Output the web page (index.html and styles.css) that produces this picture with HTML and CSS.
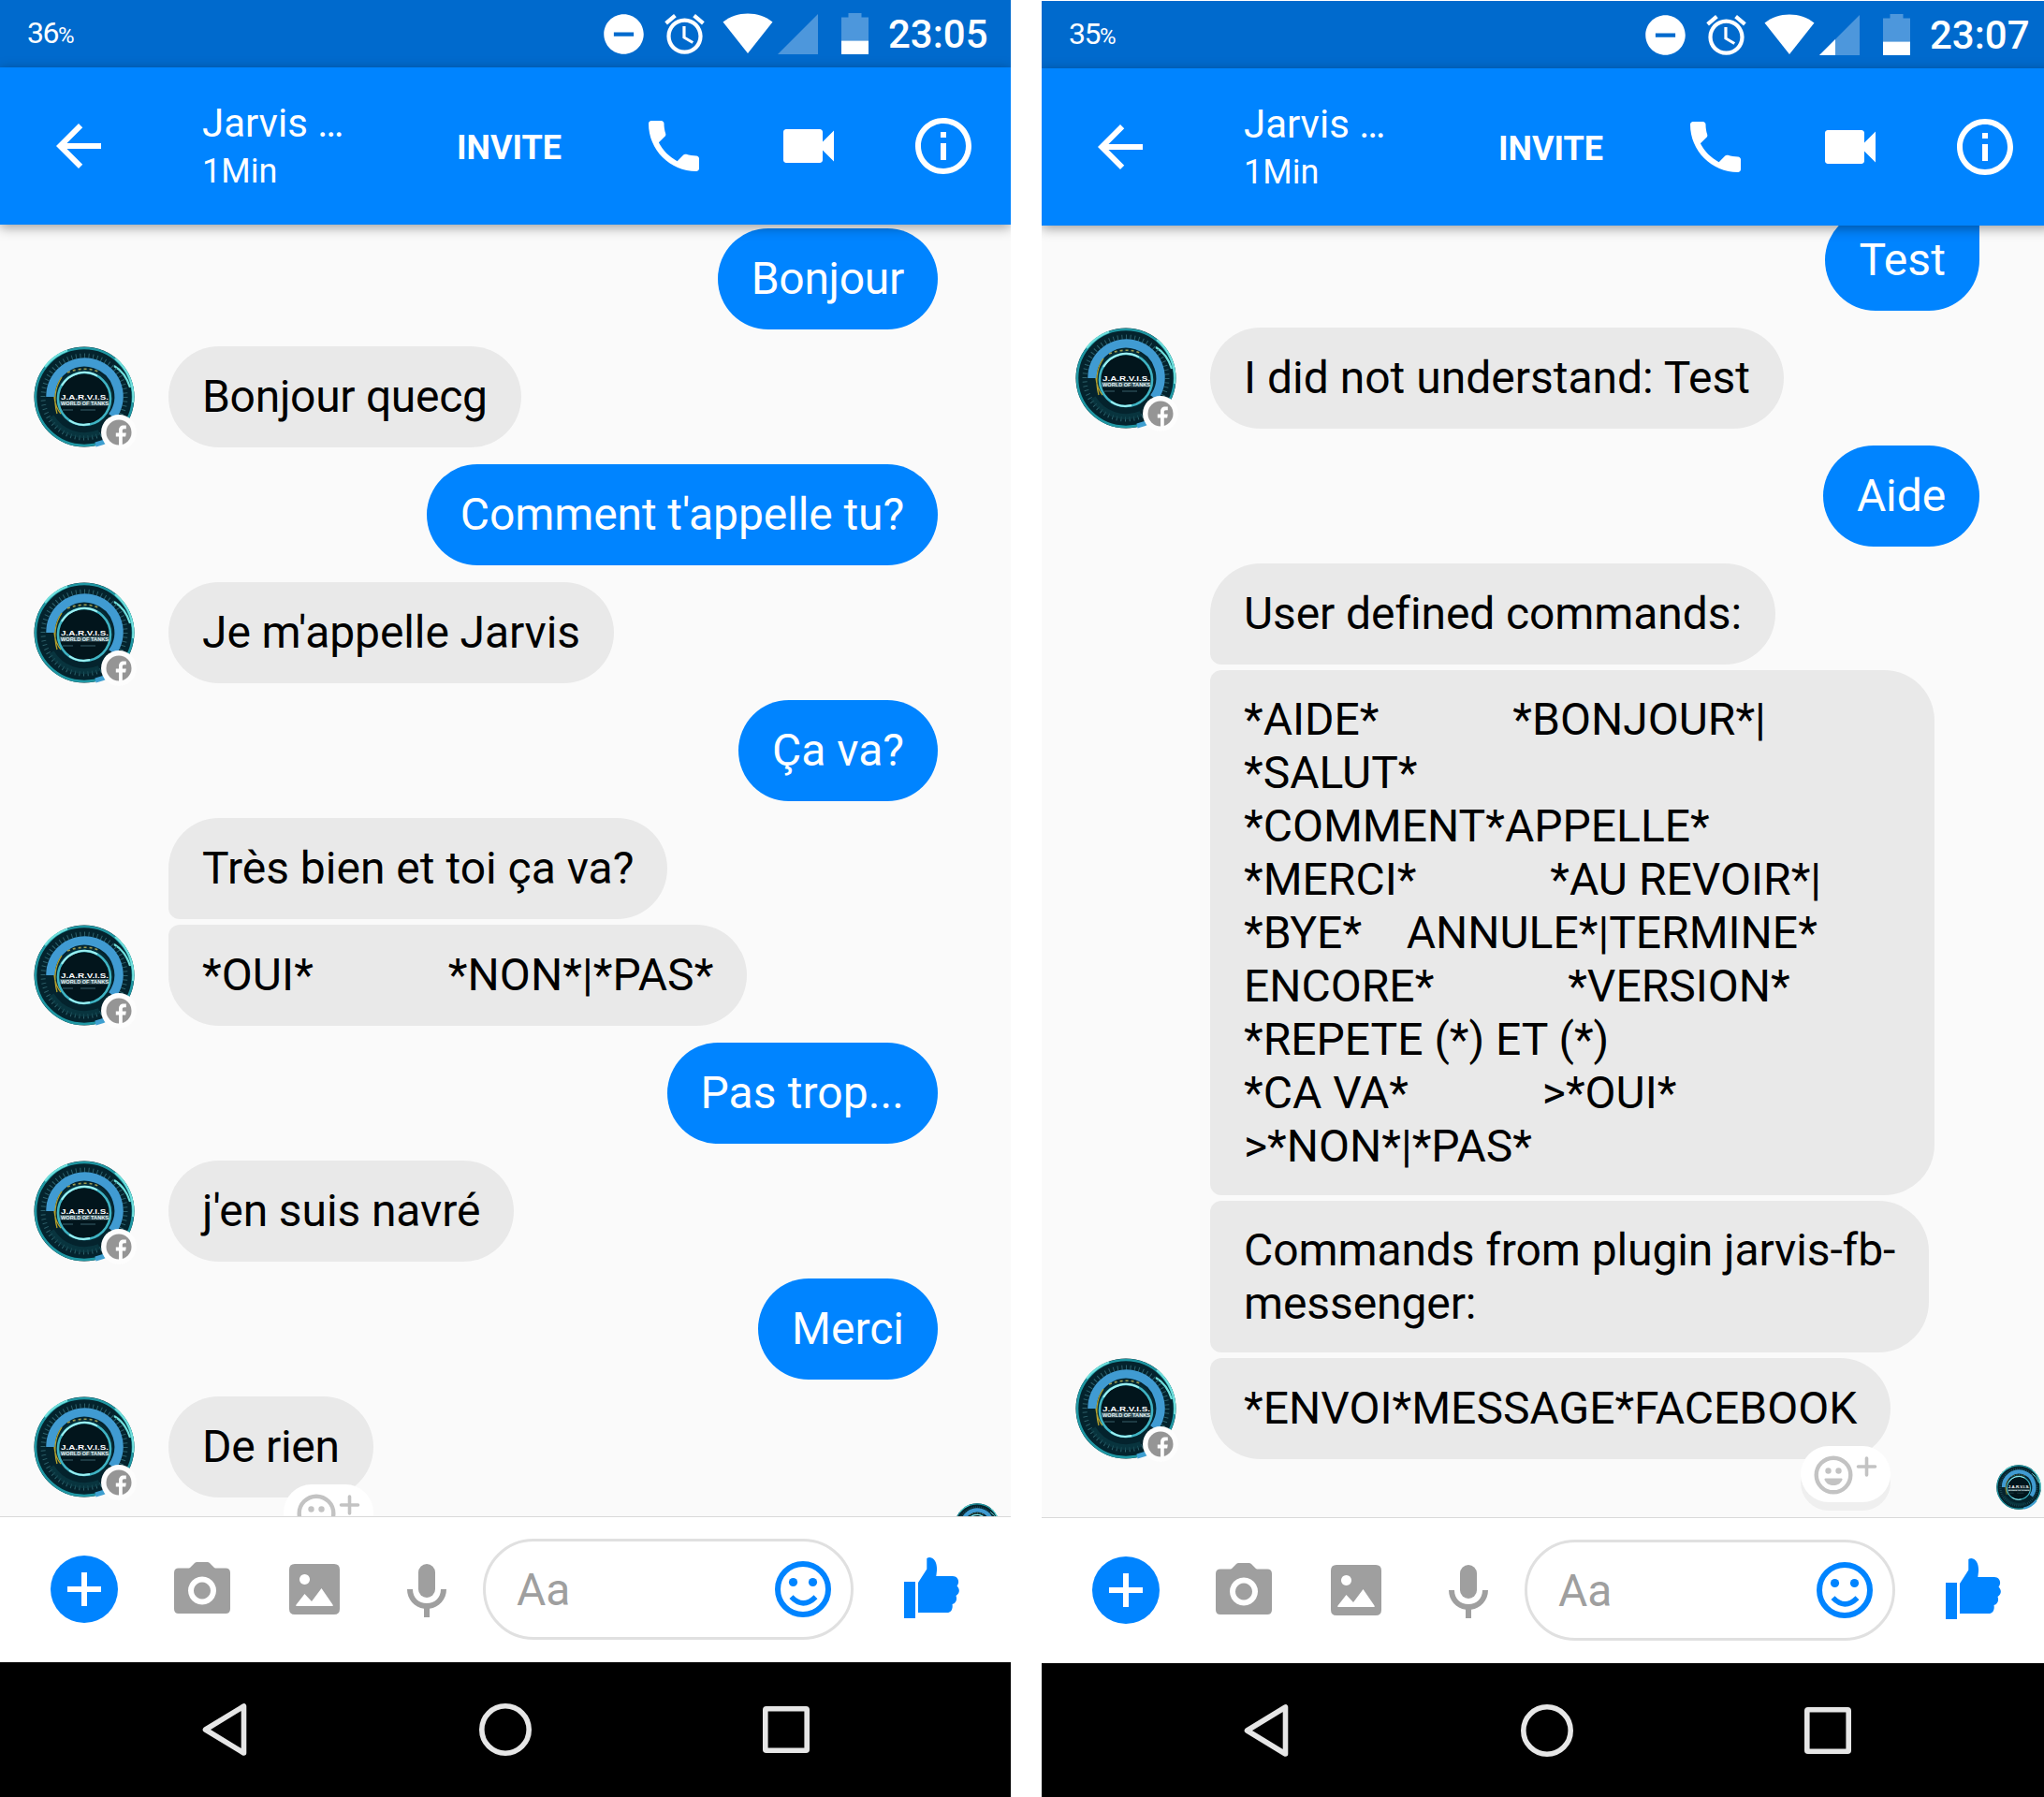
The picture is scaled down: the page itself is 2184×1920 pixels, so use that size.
FILE: index.html
```html
<!DOCTYPE html>
<html lang="fr">
<head>
<meta charset="utf-8">
<title>Jarvis</title>
<link rel="stylesheet" href="styles.css">
</head>
<body>
<svg class="defs" width="0" height="0" aria-hidden="true">
  <symbol id="dnd" viewBox="0 0 24 24"><path d="M12 2C6.48 2 2 6.48 2 12s4.48 10 10 10 10-4.48 10-10S17.52 2 12 2zm5 11H7v-2h10v2z"/></symbol>
  <symbol id="alarm" viewBox="0 0 24 24"><path d="M22 5.72l-4.6-3.86-1.29 1.53 4.6 3.86L22 5.72zM7.88 3.39L6.6 1.86 2 5.71l1.29 1.53 4.59-3.85zM12.5 8H11v6l4.75 2.85.75-1.23-4-2.37V8zM12 4c-4.97 0-9 4.03-9 9s4.02 9 9 9c4.97 0 9-4.03 9-9s-4.03-9-9-9zm0 16c-3.87 0-7-3.13-7-7s3.13-7 7-7 7 3.13 7 7-3.13 7-7 7z"/></symbol>
  <symbol id="wifi" viewBox="0 0 54 44"><path d="M0.5 9.5C8 3.500 17 0.500 27 0.500S46 3.500 53.500 9.500L27 43z"/></symbol>
  <symbol id="signal" viewBox="0 0 43 43"><path opacity=".3" d="M0 43L43 0V43z"/></symbol>
  <symbol id="signal-low" viewBox="0 0 43 43"><path opacity=".3" d="M0 43L43 0V43z"/><path d="M0 43L17 26V43z"/></symbol>
  <symbol id="battery" viewBox="0 0 29 44"><path opacity=".3" d="M7.500 0H21.500V4.500H29V29.500H0V4.500H7.500z"/><path d="M0 29.500H29V44H0z"/></symbol>
  <symbol id="back" viewBox="0 0 24 24"><path d="M20 11H7.83l5.590-5.590L12 4l-8 8 8 8 1.410-1.410L7.830 13H20v-2z"/></symbol>
  <symbol id="phone" viewBox="0 0 24 24"><path d="M6.620 10.790c1.440 2.830 3.760 5.140 6.590 6.590l2.200-2.200c.27-.27.67-.36 1.020-.24 1.120.37 2.330.57 3.570.57.55 0 1 .45 1 1V20c0 .55-.45 1-1 1-9.390 0-17-7.610-17-17 0-.55.45-1 1-1h3.500c.55 0 1 .45 1 1 0 1.250.2 2.450.57 3.570.11.35.03.74-.25 1.020l-2.200 2.200z"/></symbol>
  <symbol id="video" viewBox="0 0 24 24"><path d="M17 10.500V7c0-.55-.45-1-1-1H4c-.55 0-1 .45-1 1v10c0 .55.45 1 1 1h12c.55 0 1-.45 1-1v-3.500l4 4v-11l-4 4z"/></symbol>
  <symbol id="info" viewBox="0 0 24 24"><path d="M11 17h2v-6h-2v6zm1-15C6.480 2 2 6.480 2 12s4.480 10 10 10 10-4.480 10-10S17.520 2 12 2zm0 18c-4.410 0-8-3.590-8-8s3.590-8 8-8 8 3.590 8 8-3.590 8-8 8zM11 9h2V7h-2v2z"/></symbol>
  <symbol id="camera" viewBox="0 0 60 55"><path fill-rule="evenodd" d="M17 6l5-5q1-1 2.500-1h11Q37 0 38 1l5 5q1 .5 2 .5h10q5 0 5 5V50q0 5-5 5H5q-5 0-5-5V11.500q0-5 5-5h10q1 0 2-.5zM30 15.500a15 15 0 1 0 .01 0zM30 21.500a9 9 0 1 1-.01 0z"/></symbol>
  <symbol id="image" viewBox="0 0 54 54"><path fill-rule="evenodd" d="M6 0H48q6 0 6 6V48q0 6-6 6H6q-6 0-6-6V6Q0 0 6 0zM16.500 11a5.500 5.500 0 1 0 .01 0zM7.500 43.500q-1 1.500 .5 1.500H46q1.500 0 .5-1.500L34.500 26 24 40 16.500 32z"/></symbol>
  <symbol id="mic" viewBox="0 0 42 57"><rect x="12" width="18" height="36" rx="9"/><path d="M0 27H6C6 36 12.500 42 21 42S36 36 36 27H42C42 38 34 46.500 24 47.800V57H18V47.800C8 46.500 0 38 0 27z"/></symbol>
  <symbol id="smile" viewBox="0 0 60 60"><circle cx="30" cy="30" r="27" fill="none" stroke="currentColor" stroke-width="6"/><circle cx="19.500" cy="22.500" r="4.600"/><circle cx="40.500" cy="22.500" r="4.600"/><path d="M17.500 38.200Q30 51.500 43.500 38.200" fill="none" stroke="currentColor" stroke-width="5.600"/></symbol>
  <symbol id="thumb" viewBox="0 0 59 65"><path d="M0 26H12V65H0zM15 27L24.300 12.500V1Q25.500 0 27.500 0C33 .5 35.500 7 35 14L34.300 20H52C57.500 20 60 26 56.500 30.500 60 34 59.500 38.500 55.500 41 57 45 55.500 49 51.500 50 52.500 55 50 59 46 59H15z"/></symbol>
  <symbol id="react" viewBox="0 0 68 42"><circle cx="21" cy="21" r="18.300" fill="none" stroke="currentColor" stroke-width="4.400"/><circle cx="15.500" cy="16.500" r="3.200"/><circle cx="26.500" cy="16.500" r="3.200"/><path d="M12.500 24.500h17q1.500 0 1 1.500C28.500 30.500 25 32 21 32s-7.500-1.500-9.500-6q-.5-1.500 1-1.500z"/><path d="M47.500 12H65.500M56.500 3V21" fill="none" stroke="currentColor" stroke-width="3.600" stroke-linecap="round"/></symbol>
  <symbol id="jarvis" viewBox="0 0 108 108">
    <circle cx="54" cy="54" r="53.500" fill="#04232d"/>
    <circle cx="54" cy="54" r="52" fill="none" stroke="#1f97a3" stroke-width="2.600"/>
    <path d="M12 22A53 53 0 0 1 36 4.500M87 13A53 53 0 0 1 106 60M103 44Q98 28 86 21" fill="none" stroke="#6fe0dd" stroke-width="2.200"/>
    <path d="M96 86A52 52 0 0 1 66 105" fill="none" stroke="#3f9fd0" stroke-width="5"/>
    <circle cx="54" cy="54" r="44" fill="none" stroke="#2d616b" stroke-width="5" stroke-dasharray="1 3.600"/>
    <path d="M18 54A36.500 36.500 0 1 1 84 75" fill="none" stroke="#409bd2" stroke-width="9.500"/>
    <path d="M19 75A41 41 0 0 0 70 92" fill="none" stroke="#0b3f4a" stroke-width="6" opacity=".6"/>
    <circle cx="54" cy="55" r="31" fill="#072c36"/>
    <path d="M36 28Q54 21 69 27" fill="none" stroke="#9c9b50" stroke-width="1.600" stroke-dasharray="3 3"/>
    <path d="M30 33Q19 49 25 72M29 72Q23 65 22 54" fill="none" stroke="#b3a02d" stroke-width="1.300"/>
    <circle cx="54" cy="56" r="28" fill="#02151c" stroke="#3fb4c4" stroke-width="2.600"/>
    <path d="M30 42A28 28 0 0 1 68 31.500M38 79A28 28 0 0 0 53 84L60 83" fill="none" stroke="#9ceff0" stroke-width="2"/>
    <rect x="28" y="58" width="52" height="5.500" fill="#52727b" opacity=".7"/>
    <path d="M31 68H42M50 68H66" stroke="#38616b" stroke-width="1"/>
  </symbol>
  <symbol id="fb" viewBox="0 0 38 38"><circle cx="19" cy="19" r="19" fill="#fdfdfd"/><circle cx="19" cy="19" r="13.500" fill="#959595"/><path d="M19 33V23.500H15.800V19.500H19V17C19 13.300 21 11.500 24 11.500H26.800V15.300H24.800C23.300 15.300 22.800 16 22.800 17.200V19.500H26.800L26.200 23.500H22.800V33z" fill="#fdfdfd"/></symbol>
</svg>

<main class="screens">
  <section class="phone">
    <div class="status">
      <div class="percent">36<small>%</small></div>
      <svg class="s-icon"><use href="#dnd"/></svg>
      <svg class="s-icon s-alarm"><use href="#alarm"/></svg>
      <svg class="s-wifi"><use href="#wifi"/></svg>
      <svg class="s-signal"><use href="#signal"/></svg>
      <svg class="s-battery"><use href="#battery"/></svg>
      <div class="clock">23:05</div>
    </div>
    <header class="bar">
      <svg class="b-icon"><use href="#back"/></svg>
      <div class="who"><div class="name">Jarvis …</div><div class="seen">1Min</div></div>
      <div class="invite">INVITE</div>
      <svg class="b-icon"><use href="#phone"/></svg>
      <svg class="b-icon"><use href="#video"/></svg>
      <svg class="b-icon"><use href="#info"/></svg>
    </header>
    <div class="chat">
      <div class="msg out"><div class="bubble tight">Bonjour</div></div>
      <div class="msg in"><div class="avatar"><svg viewBox="0 0 108 108"><use href="#jarvis"/><text class="logo-name" x="29" y="56.500" textLength="51" lengthAdjust="spacingAndGlyphs">J.A.R.V.I.S.</text><text class="logo-sub" x="29" y="63" textLength="51" lengthAdjust="spacingAndGlyphs">WORLD OF TANKS</text></svg><svg class="badge"><use href="#fb"/></svg></div><div class="bubble tight">Bonjour quecg</div></div>
      <div class="msg out"><div class="bubble snug">Comment t'appelle tu?</div></div>
      <div class="msg in"><div class="avatar"><svg viewBox="0 0 108 108"><use href="#jarvis"/><text class="logo-name" x="29" y="56.500" textLength="51" lengthAdjust="spacingAndGlyphs">J.A.R.V.I.S.</text><text class="logo-sub" x="29" y="63" textLength="51" lengthAdjust="spacingAndGlyphs">WORLD OF TANKS</text></svg><svg class="badge"><use href="#fb"/></svg></div><div class="bubble snug">Je m'appelle Jarvis</div></div>
      <div class="msg out"><div class="bubble">Ça va?</div></div>
      <div class="msg in"><div class="bubble first">Très bien et toi ça va?</div></div>
      <div class="msg in joined"><div class="avatar"><svg viewBox="0 0 108 108"><use href="#jarvis"/><text class="logo-name" x="29" y="56.500" textLength="51" lengthAdjust="spacingAndGlyphs">J.A.R.V.I.S.</text><text class="logo-sub" x="29" y="63" textLength="51" lengthAdjust="spacingAndGlyphs">WORLD OF TANKS</text></svg><svg class="badge"><use href="#fb"/></svg></div><div class="bubble last loose">*OUI*            *NON*|*PAS*</div></div>
      <div class="msg out"><div class="bubble loose">Pas trop...</div></div>
      <div class="msg in"><div class="avatar"><svg viewBox="0 0 108 108"><use href="#jarvis"/><text class="logo-name" x="29" y="56.500" textLength="51" lengthAdjust="spacingAndGlyphs">J.A.R.V.I.S.</text><text class="logo-sub" x="29" y="63" textLength="51" lengthAdjust="spacingAndGlyphs">WORLD OF TANKS</text></svg><svg class="badge"><use href="#fb"/></svg></div><div class="bubble snug">j'en suis navré</div></div>
      <div class="msg out"><div class="bubble">Merci</div></div>
      <div class="msg in"><div class="avatar"><svg viewBox="0 0 108 108"><use href="#jarvis"/><text class="logo-name" x="29" y="56.500" textLength="51" lengthAdjust="spacingAndGlyphs">J.A.R.V.I.S.</text><text class="logo-sub" x="29" y="63" textLength="51" lengthAdjust="spacingAndGlyphs">WORLD OF TANKS</text></svg><svg class="badge"><use href="#fb"/></svg></div><div class="bubble tight">De rien<span class="react"><svg><use href="#react"/></svg></span></div></div>
      <div class="receipt"><svg><use href="#jarvis"/></svg></div>
    </div>
    <div class="composer">
      <div class="plus"></div>
      <svg class="c-camera"><use href="#camera"/></svg>
      <svg class="c-image"><use href="#image"/></svg>
      <svg class="c-mic"><use href="#mic"/></svg>
      <div class="field"><span>Aa</span><svg class="c-smile"><use href="#smile"/></svg></div>
      <svg class="c-thumb"><use href="#thumb"/></svg>
    </div>
    <nav class="nav">
      <svg viewBox="0 0 60 60"><path d="M50.500 5V55L9.500 30z" stroke-linejoin="round"/></svg>
      <svg viewBox="0 0 60 60"><circle cx="30" cy="30" r="25.200"/></svg>
      <svg viewBox="0 0 60 60"><rect x="7.800" y="7.800" width="44.400" height="44.400" rx="1"/></svg>
    </nav>
  </section>

  <section class="phone second">
    <div class="status">
      <div class="percent">35<small>%</small></div>
      <svg class="s-icon"><use href="#dnd"/></svg>
      <svg class="s-icon s-alarm"><use href="#alarm"/></svg>
      <svg class="s-wifi"><use href="#wifi"/></svg>
      <svg class="s-signal"><use href="#signal-low"/></svg>
      <svg class="s-battery"><use href="#battery"/></svg>
      <div class="clock">23:07</div>
    </div>
    <header class="bar">
      <svg class="b-icon"><use href="#back"/></svg>
      <div class="who"><div class="name">Jarvis …</div><div class="seen">1Min</div></div>
      <div class="invite">INVITE</div>
      <svg class="b-icon"><use href="#phone"/></svg>
      <svg class="b-icon"><use href="#video"/></svg>
      <svg class="b-icon"><use href="#info"/></svg>
    </header>
    <div class="chat scrolled">
      <div class="msg out"><div class="bubble tail loose">Test</div></div>
      <div class="msg in"><div class="avatar"><svg viewBox="0 0 108 108"><use href="#jarvis"/><text class="logo-name" x="29" y="56.500" textLength="51" lengthAdjust="spacingAndGlyphs">J.A.R.V.I.S.</text><text class="logo-sub" x="29" y="63" textLength="51" lengthAdjust="spacingAndGlyphs">WORLD OF TANKS</text></svg><svg class="badge"><use href="#fb"/></svg></div><div class="bubble">I did not understand: Test</div></div>
      <div class="msg out"><div class="bubble snug">Aide</div></div>
      <div class="msg in"><div class="bubble first snug">User defined commands:</div></div>
      <div class="msg in joined"><div class="bubble middle long commands">*AIDE*            *BONJOUR*|
*SALUT*
*COMMENT*APPELLE*
*MERCI*            *AU REVOIR*|
*BYE*    ANNULE*|TERMINE*
ENCORE*            *VERSION*
*REPETE (*) ET (*)
*CA VA*            &gt;*OUI*
&gt;*NON*|*PAS*</div></div>
      <div class="msg in joined"><div class="bubble middle long snug">Commands from plugin jarvis-fb-
messenger:</div></div>
      <div class="msg in joined"><div class="avatar"><svg viewBox="0 0 108 108"><use href="#jarvis"/><text class="logo-name" x="29" y="56.500" textLength="51" lengthAdjust="spacingAndGlyphs">J.A.R.V.I.S.</text><text class="logo-sub" x="29" y="63" textLength="51" lengthAdjust="spacingAndGlyphs">WORLD OF TANKS</text></svg><svg class="badge"><use href="#fb"/></svg></div><div class="bubble last">*ENVOI*MESSAGE*FACEBOOK<span class="react"><svg><use href="#react"/></svg></span></div></div>
      <div class="receipt"><svg viewBox="0 0 108 108"><use href="#jarvis"/><text class="logo-name" x="29" y="56.500" textLength="51" lengthAdjust="spacingAndGlyphs">J.A.R.V.I.S.</text><text class="logo-sub" x="29" y="63" textLength="51" lengthAdjust="spacingAndGlyphs">WORLD OF TANKS</text></svg></div>
    </div>
    <div class="composer">
      <div class="plus"></div>
      <svg class="c-camera"><use href="#camera"/></svg>
      <svg class="c-image"><use href="#image"/></svg>
      <svg class="c-mic"><use href="#mic"/></svg>
      <div class="field"><span>Aa</span><svg class="c-smile"><use href="#smile"/></svg></div>
      <svg class="c-thumb"><use href="#thumb"/></svg>
    </div>
    <nav class="nav">
      <svg viewBox="0 0 60 60"><path d="M50.500 5V55L9.500 30z" stroke-linejoin="round"/></svg>
      <svg viewBox="0 0 60 60"><circle cx="30" cy="30" r="25.200"/></svg>
      <svg viewBox="0 0 60 60"><rect x="7.800" y="7.800" width="44.400" height="44.400" rx="1"/></svg>
    </nav>
  </section>
</main>
</body>
</html>
```
FILE: styles.css
```css
* { box-sizing: border-box; }

body {
  margin: 0;
  width: 2184px;
  height: 1920px;
  overflow: hidden;
  background: #fff;
  font-family: Roboto, "Liberation Sans", sans-serif;
}

svg { display: block; fill: currentColor; flex: none; }
.defs { position: absolute; }

.screens { display: flex; gap: 33px; width: 2193px; height: 1920px; overflow: hidden; }
.phone { display: flex; flex-direction: column; flex: none; width: 1080px; height: 1920px; overflow: hidden; }
.second { margin-top: 1px; }

/* Status bar */
.status {
  display: flex;
  align-items: center;
  flex: none;
  height: 72px;
  padding-left: 29px;
  background: #006acd;
  color: #fff;
}
.percent {
  flex: none;
  width: 612px;
  padding-top: 1px;
  font: 400 32px/40px Roboto, sans-serif;
  letter-spacing: -1.500px;
  white-space: nowrap;
}
.percent small { font-size: 24px; letter-spacing: 0; }
.s-icon { width: 51px; height: 51px; }
.s-alarm { margin-left: 14px; }
.s-wifi { width: 54px; height: 44px; margin: 0 5px 0 15px; }
.s-signal { width: 43px; height: 43px; }
.s-battery { width: 29px; height: 44px; margin: 0 21px 0 25px; }
.clock { font-size: 42px; font-weight: 500; line-height: 50px; margin-top: 2px; }

/* Conversation header */
.bar {
  position: relative;
  z-index: 1;
  display: flex;
  align-items: center;
  flex: none;
  height: 168px;
  padding: 0 36px 0 48px;
  background: #0084ff;
  color: #fff;
  box-shadow: 0 3px 12px rgba(0, 0, 0, .38);
}
.b-icon { width: 72px; height: 72px; margin-right: 72px; }
.b-icon:first-child { margin-right: 96px; }
.b-icon:last-child { margin-right: 0; }
.who { width: 272px; padding-top: 3px; }
.name { font-size: 42px; line-height: 51px; }
.seen { font-size: 36px; line-height: 53px; }
.invite { width: 196px; font-size: 36px; font-weight: 700; line-height: 42px; padding-top: 3px; }

/* Messages */
.chat { flex: none; height: 1380px; padding-top: 4px; overflow: hidden; background: #fafafa; }
.scrolled { padding-top: 0; }
.scrolled .msg:first-child { margin-top: -17px; }
.msg { position: relative; display: flex; margin-top: 18px; }
.msg:first-child { margin-top: 0; }
.out { justify-content: flex-end; padding-right: 78px; }
.in { padding-left: 180px; }
.msg.joined { margin-top: 6px; }
.bubble {
  position: relative;
  height: 108px;
  padding: 25px 36px 26px;
  border-radius: 54px;
  font-size: 48px;
  line-height: 57px;
  white-space: pre;
}
.out .bubble { background: #0084ff; color: #fff; }
.in .bubble { background: #e9e9e9; color: #000; }
.bubble.tail { border-top-right-radius: 12px; }
.bubble.first { border-bottom-left-radius: 12px; }
.bubble.middle { border-top-left-radius: 12px; border-bottom-left-radius: 12px; }
.bubble.last { border-top-left-radius: 12px; }
.bubble.long { height: auto; padding: 24px 36px; }
.bubble.commands { width: 774px; }
.tight { letter-spacing: -.3px; }
.snug { letter-spacing: -.1px; }
.loose { letter-spacing: .08px; }

.avatar { position: absolute; left: 36px; top: 0; width: 108px; height: 108px; }
.avatar svg { width: 108px; height: 108px; }
.avatar .badge { position: absolute; left: 72px; top: 73px; width: 38px; height: 38px; }
.logo-name { font: 700 8px "Liberation Sans", sans-serif; fill: #fff; }
.logo-sub { font: 700 5.500px "Liberation Sans", sans-serif; fill: #e4f4f6; }

.react {
  position: absolute;
  right: 0;
  top: 94px;
  z-index: 1;
  width: 96px;
  height: 60px;
  padding: 10px 0 0 14px;
  border-radius: 30px;
  background: #fff;
  box-shadow: 0 9px 0 #efefef;
  color: #c3c3c3;
}
.react svg { width: 68px; height: 42px; }

.receipt { display: flex; justify-content: flex-end; margin-top: 6px; padding-right: 12px; }
.receipt svg { width: 48px; height: 48px; }

/* Composer */
.composer {
  display: flex;
  align-items: center;
  flex: none;
  height: 156px;
  padding: 0 0 1px 54px;
  border-top: 1px solid #d9d9d9;
  background: #fff;
  color: #9f9f9f;
}
.plus {
  width: 72px;
  height: 72px;
  border-radius: 50%;
  background:
    linear-gradient(#fff, #fff) center / 36px 6px no-repeat,
    linear-gradient(#fff, #fff) center / 6px 36px no-repeat,
    #0084ff;
}
.c-camera { width: 60px; height: 55px; margin: 0 63px 3px 60px; }
.c-image { width: 54px; height: 54px; }
.c-mic { width: 42px; height: 57px; margin: 3px 39px 0 72px; }
.field {
  display: flex;
  align-items: center;
  justify-content: space-between;
  width: 396px;
  height: 108px;
  padding: 0 21px 0 33px;
  border: 3px solid #e0e0e0;
  border-radius: 54px;
  font-size: 48px;
  line-height: 57px;
}
.field span { padding-top: 1px; }
.c-smile { width: 60px; height: 60px; color: #0084ff; }
.c-thumb { width: 59px; height: 65px; margin: 0 0 4px 54px; color: #0084ff; }

/* System navigation */
.nav {
  display: flex;
  align-items: center;
  justify-content: center;
  gap: 240px;
  flex: none;
  height: 144px;
  background: #000;
}
.nav svg { width: 60px; height: 60px; fill: none; stroke: #e6e6e6; stroke-width: 5.600; }
```
